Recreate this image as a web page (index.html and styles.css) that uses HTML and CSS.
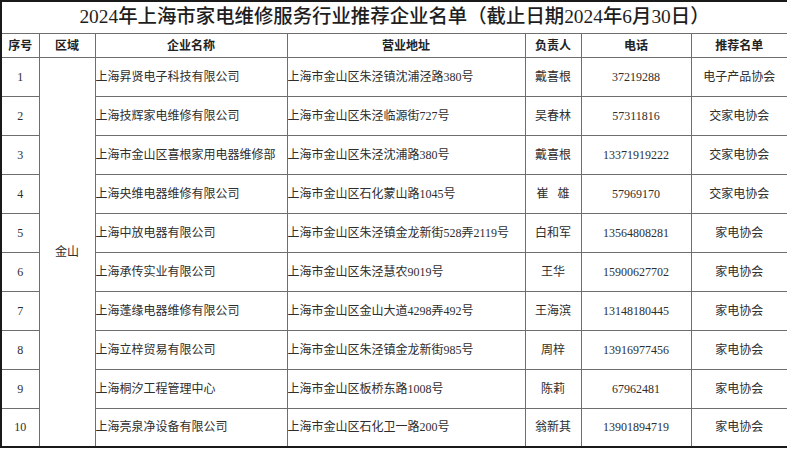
FILE: index.html
```html
<!DOCTYPE html>
<html lang="zh-CN">
<head>
<meta charset="utf-8">
<title>2024年上海市家电维修服务行业推荐企业名单</title>
<link rel="stylesheet" href="styles.css">
</head>
<body>
<table class="list">
  <colgroup>
    <col class="c-no">
    <col class="c-area">
    <col class="c-name">
    <col class="c-addr">
    <col class="c-person">
    <col class="c-tel">
    <col class="c-rec">
  </colgroup>
  <thead>
    <tr class="title-row"><th colspan="7" class="title">2024年上海市家电维修服务行业推荐企业名单（截止日期2024年6月30日）</th></tr>
    <tr class="head-row">
      <th>序号</th><th>区域</th><th>企业名称</th><th>营业地址</th><th>负责人</th><th>电话</th><th>推荐名单</th>
    </tr>
  </thead>
  <tbody>
    <tr><td class="ctr">1</td><td class="ctr area" rowspan="10">金山</td><td class="lft">上海昇贤电子科技有限公司</td><td class="lft">上海市金山区朱泾镇沈浦泾路380号</td><td class="ctr">戴喜根</td><td class="ctr">37219288</td><td class="ctr">电子产品协会</td></tr>
    <tr><td class="ctr">2</td><td class="lft">上海技辉家电维修有限公司</td><td class="lft">上海市金山区朱泾临源街727号</td><td class="ctr">吴春林</td><td class="ctr">57311816</td><td class="ctr">交家电协会</td></tr>
    <tr><td class="ctr">3</td><td class="lft">上海市金山区喜根家用电器维修部</td><td class="lft">上海市金山区朱泾沈浦路380号</td><td class="ctr">戴喜根</td><td class="ctr">13371919222</td><td class="ctr">交家电协会</td></tr>
    <tr><td class="ctr">4</td><td class="lft">上海央维电器维修有限公司</td><td class="lft">上海市金山区石化蒙山路1045号</td><td class="ctr">崔&nbsp;&nbsp;&nbsp;雄</td><td class="ctr">57969170</td><td class="ctr">交家电协会</td></tr>
    <tr><td class="ctr">5</td><td class="lft">上海中放电器有限公司</td><td class="lft">上海市金山区朱泾镇金龙新街528弄2119号</td><td class="ctr">白和军</td><td class="ctr">13564808281</td><td class="ctr">家电协会</td></tr>
    <tr><td class="ctr">6</td><td class="lft">上海承传实业有限公司</td><td class="lft">上海市金山区朱泾慧农9019号</td><td class="ctr">王华</td><td class="ctr">15900627702</td><td class="ctr">家电协会</td></tr>
    <tr><td class="ctr">7</td><td class="lft">上海蓬缘电器维修有限公司</td><td class="lft">上海市金山区金山大道4298弄492号</td><td class="ctr">王海滨</td><td class="ctr">13148180445</td><td class="ctr">家电协会</td></tr>
    <tr><td class="ctr">8</td><td class="lft">上海立梓贸易有限公司</td><td class="lft">上海市金山区朱泾镇金龙新街985号</td><td class="ctr">周梓</td><td class="ctr">13916977456</td><td class="ctr">家电协会</td></tr>
    <tr><td class="ctr">9</td><td class="lft">上海桐汐工程管理中心</td><td class="lft">上海市金山区板桥东路1008号</td><td class="ctr">陈莉</td><td class="ctr">67962481</td><td class="ctr">家电协会</td></tr>
    <tr><td class="ctr">10</td><td class="lft">上海亮泉净设备有限公司</td><td class="lft">上海市金山区石化卫一路200号</td><td class="ctr">翁新其</td><td class="ctr">13901894719</td><td class="ctr">家电协会</td></tr>
  </tbody>
</table>
</body>
</html>
```
FILE: styles.css
```css
html, body {
  margin: 0;
  padding: 0;
  background: #ffffff;
}

body {
  font-family: "Liberation Serif", "Noto Sans CJK SC", serif;
  color: #2e2e2e;
  font-size: 12px;
}

.list {
  width: 787px;
  border-collapse: collapse;
  table-layout: fixed;
  border: 2px solid #1a1a1a;
}

.c-no { width: 38px; }
.c-area { width: 56px; }
.c-name { width: 192px; }
.c-addr { width: 238px; }
.c-person { width: 56px; }
.c-tel { width: 110px; }
.c-rec { width: 97px; }

.list th,
.list td {
  border: 1px solid #6e6e6e;
  padding: 0;
  line-height: 16px;
  white-space: nowrap;
  overflow: hidden;
}

.title-row { height: 32px; }

.title {
  font-family: "Liberation Serif", "Noto Sans CJK SC", serif;
  font-size: 19.4px;
  font-weight: 500;
  color: #1e1e1e;
  text-align: center;
  line-height: 22px;
  padding-top: 2px;
  border-bottom: 2px solid #777777;
}

.head-row { height: 24px; }

.head-row th {
  font-family: "Noto Sans CJK SC", sans-serif;
  font-weight: bold;
  font-size: 12px;
  color: #222222;
  text-align: center;
}

.list tbody tr { height: 39px; }

.ctr { text-align: center; }

.lft {
  text-align: left;
  padding-left: 3px;
}

.area {
  vertical-align: middle;
}
```
